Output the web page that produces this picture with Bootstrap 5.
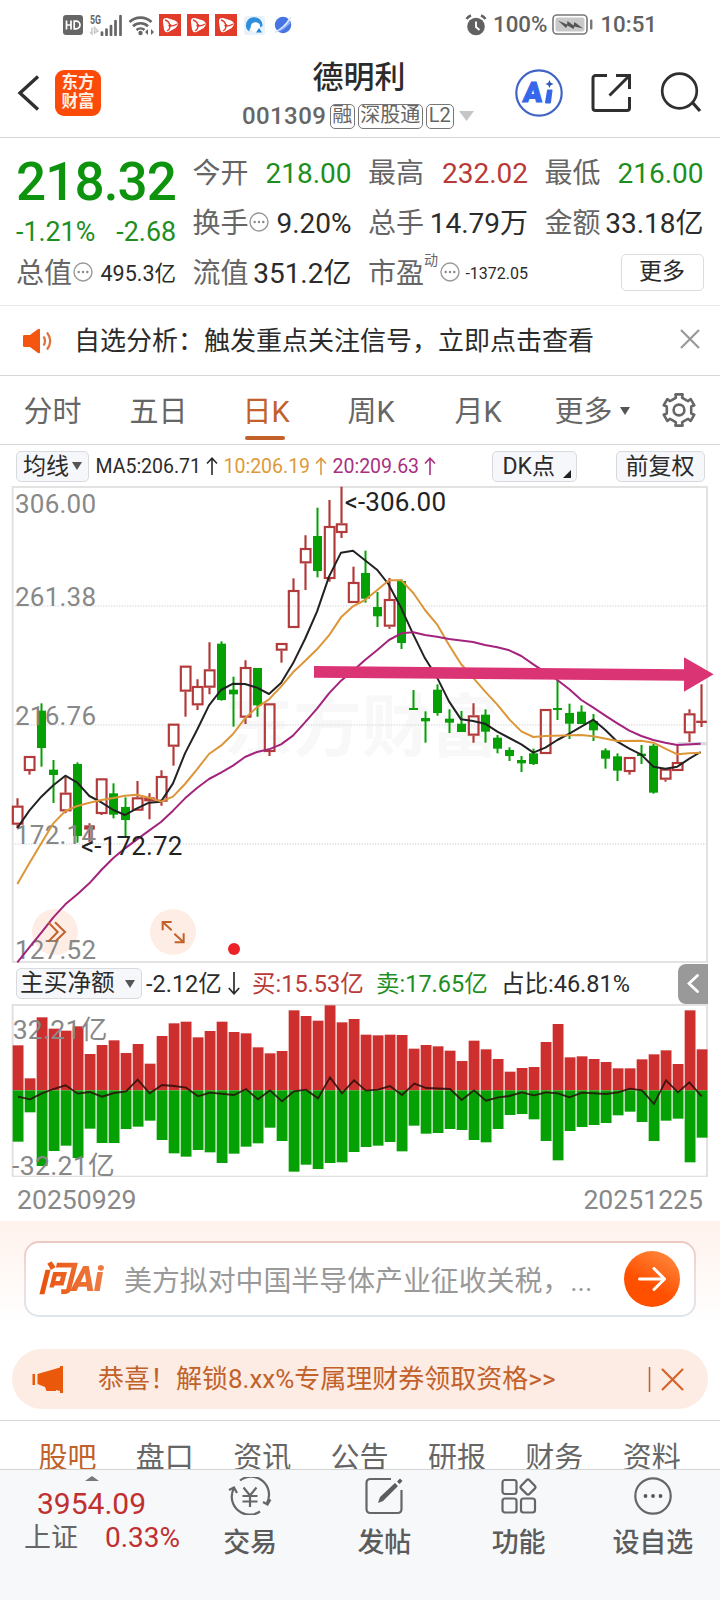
<!DOCTYPE html>
<html lang="zh-CN">
<head>
<meta charset="utf-8">
<meta name="viewport" content="width=device-width, initial-scale=1">
<title>德明利 001309</title>
<link rel="stylesheet" href="https://cdn.jsdelivr.net/npm/bootstrap@5.3.0/dist/css/bootstrap.min.css">
<style>
  :root{--up:#b93a38;--down:#1e8e1e;--accent:#c2612a;--ink:#2b2b2b;--dim:#666;--line:#d6d7d9}
  html,body{overflow:hidden}
  body{font-family:Roboto,"Noto Sans CJK SC",sans-serif;color:var(--ink);background:#fff;width:720px;height:1600px;white-space:nowrap}
  svg{display:block;flex:none}
  .c-up{color:var(--up)}.c-down{color:var(--down)}.c-dim{color:var(--dim)}.c-accent{color:var(--accent)}
  .statusbar{height:48px;padding:1px 63px 0 63px;color:#616161;font-size:22.3px;font-weight:500;line-height:49px}
  .topbar{height:90px;border-bottom:1px solid var(--line)}
  .topbar-left{width:242px;padding-left:17px}
  .topbar-mid{width:234px}
  .app-logo{width:46px;height:46px;border-radius:9px;background:#fc4a08;color:#ffefe4;font-size:16.5px;line-height:19.5px;font-weight:700;margin-left:15px;padding-top:3px}
  .stock-name{font-size:31px;line-height:38px;font-weight:500;padding-top:11px}
  .stock-code{font-size:24px;font-weight:500;line-height:28px;color:#666}
  .tagbox{border:1.5px solid #777;border-radius:5px;height:25px;line-height:21px;font-size:20px;font-weight:400;padding:0 1.5px;color:#666}
  .quote{height:168px;padding:11px 16px 0;border-bottom:1px solid #eaeaea;grid-template-columns:160px 159px 160px 159px;column-gap:16.5px;grid-template-rows:50px 50px 50px;font-size:28px;line-height:50px}
  .price{font-size:53px;font-weight:500;color:#0d930d;line-height:66px;letter-spacing:-.9px}
  .chg{font-size:26.8px;line-height:34px}
  .dots{width:20px;height:20px}
  .pill-more{height:37px;width:83px;border:1.5px solid #dcdcdc;border-radius:5px;line-height:33px;font-size:23px;margin-top:4.5px}
  .notice{height:70px;padding:0 20px 0 22px;font-size:26px;border-bottom:1px solid var(--line)}
  .periods{height:69px;border-bottom:1px solid var(--line);grid-template-columns:106px 113px 105px 107px 100px 107px 36px;padding-left:23.5px;font-size:29px;line-height:73px;color:#666}
  .underbar{position:absolute;left:2px;bottom:9px;width:40px;height:4px;border-radius:2px;background:var(--accent)}
  .chip{background:#f6f7fa;border:1.5px solid #d9dadd;border-radius:5px;height:31px;line-height:29px;font-size:23px;padding:0 6px}
  .ma-row{height:41px;padding:1px 15.5px 0 16px;font-size:19.5px;line-height:31px}
  .flow-row{height:41px;padding-left:16px;font-size:23.5px}
  .flow-row>span:not(.chip):not(.side-tab){padding-top:3px}
  .side-tab{width:30px;height:40px;background:#999;border-radius:8px 0 0 8px;margin-right:12px}
  .dates{height:44px;padding:0 17px;font-size:26.6px;color:#888;line-height:46px}
  .ask{height:128px;background:linear-gradient(#fff2ec 0,#fff 100px);padding:20px 24px 0}
  .ask-box{height:76px;border:2px solid transparent;border-radius:15px;background:linear-gradient(#fff,#fff) padding-box,linear-gradient(#ecc9c2,#f0dedd 50%,#dfe5ee) border-box;padding:0 14px 0 12px}
  .ask-logo{font-size:35px;font-weight:900;font-style:italic;letter-spacing:-1px;width:86px;padding-top:2px;background:linear-gradient(90deg,#e8500c,#f08a55);-webkit-background-clip:text;background-clip:text;color:transparent}
  .ask-text{font-size:27.9px;color:#999;padding-top:5px}
  .go{width:56px;height:56px;border-radius:50%;background:linear-gradient(30deg,#ff5000 40%,#ff9147)}
  .promo{height:60px;margin:0 12px;border-radius:30px;background:#fcece4;padding:0 24px 0 20px;font-size:26px;color:var(--accent)}
  .sections{height:49px;margin-top:11px;border-top:1px solid var(--line);padding-left:38.5px;font-size:29px;line-height:74px;color:#666;overflow:hidden}
  .sections>div{width:97.6px}
  .dock{height:131px;background:#f7f8fa;border-top:1px solid #d3d4d6}
  .dock-index{width:183px}
  .dock-item{flex:1 1 0;min-width:0;font-size:27px;line-height:38px;color:#5c5c5c;font-weight:500;padding-top:7px}
  .dock-item span{margin-top:9px}
  .idx-value{font-size:30px;line-height:36px;color:#c0302f;padding-left:37px}
</style>
</head>
<body>

<header>
  <div class="statusbar d-flex align-items-center">
    <svg width="20" height="20" viewBox="0 0 20 20"><rect width="20" height="20" rx="3" fill="#666"/><path d="M3.500 5.500v9M3.500 10h4M8 5.500v9M11.200 6.200v7.600h2a3.800 3.800 0 0 0 0-7.600z" fill="none" stroke="#fff" stroke-width="1.700"/></svg>
    <svg style="margin-left:6px" width="34" height="22" viewBox="0 0 34 22"><text x="1" y="9.500" font-size="12" font-weight="700" fill="#666" textLength="11" lengthAdjust="spacingAndGlyphs">5G</text><path d="M3 13.500v6.500l-2-2M5.500 20v-6.500l3.500 3.500-3 1.500" stroke="#c9c9c9" stroke-width="1.500" fill="none"/><path d="M13 18.500v2.500M17.500 15.500v5.500M22 12v9M26.500 7v14M31.500 2v19" stroke="#666" stroke-width="2.700" stroke-linecap="round"/></svg>
    <svg style="margin-left:5px" width="27" height="22" viewBox="0 0 27 22"><g fill="none" stroke="#666" stroke-width="2.600"><path d="M1.500 8A16 16 0 0 1 23.500 8M5 12.200a11 11 0 0 1 15 0M8.500 16a6 6 0 0 1 8 0"/></g><circle cx="12.500" cy="19" r="2.200" fill="#666"/><path d="M17 18l3-3v6zM26 18l-3-3v6z" fill="#666"/></svg>
    <div class="d-flex" style="gap:6px;margin-left:4px">
      <svg width="22" height="22" viewBox="0 0 22 22"><use href="#clipApp"/></svg>
      <svg width="22" height="22" viewBox="0 0 22 22"><use href="#clipApp"/></svg>
      <svg width="22" height="22" viewBox="0 0 22 22"><use href="#clipApp"/></svg>
    </div>
    <svg style="margin-left:7px" width="21" height="21" viewBox="0 0 21 21"><rect y="2" width="21" height="19" rx="3" fill="#e9f1f9"/><path d="M2.500 14.500a8.300 8.300 0 1 1 16-2.500l-3 2a5 5 0 0 0-8-1 4 4 0 0 0-2 4.500q-2-1-3-3z" fill="#2d8fdc"/><circle cx="11.500" cy="13" r="4.800" fill="#fff"/><path d="M12 18.500h6l-3-4.500z" fill="#2486d8"/></svg>
    <svg style="margin-left:9px" width="18" height="18" viewBox="0 0 18 18"><circle cx="9" cy="9" r="8.200" fill="#4674e2"/><path d="M.5 16.500C7 14 13 8 17 1" stroke="#dfe9ff" stroke-width="1.800" fill="none"/><path d="M4 15.500C9 13 14 9 16.500 5.500" stroke="#8fb1f8" stroke-width="1.300" fill="none"/></svg>
    <svg class="ms-auto" width="22" height="22" viewBox="0 0 22 22"><circle cx="11" cy="12.500" r="8.800" fill="#616161"/><path d="M1.500 5a9 9 0 0 1 4.500-3.500M20.500 5A9 9 0 0 0 16 1.500" stroke="#616161" stroke-width="2.400" fill="none"/><path d="M11 7.500v5.500l3.500 3" stroke="#fff" stroke-width="1.900" fill="none"/></svg>
    <span style="margin-left:6px">100%</span>
    <svg style="margin:0 7px 0 5px" width="41" height="21" viewBox="0 0 41 21"><rect x="1" y="1" width="34" height="19" rx="4" fill="#fff" stroke="#777" stroke-width="1.600"/><rect x="3.500" y="3.500" width="29" height="14" rx="2" fill="#c9c9c9"/><path d="M6 6.500l9 4 .5-3.500 6 4.500 1-3.500 8.500 6.500-8.500-2-1 2.500-6-3.500-1.500 2.500z" fill="#555"/><rect x="38" y="5.500" width="2.400" height="10" rx="1" fill="#777"/></svg>
    <span>10:51</span>
  </div>

  <div class="topbar d-flex">
    <div class="topbar-left d-flex align-items-center">
      <svg width="23" height="36" viewBox="0 0 23 36"><path d="M21 1.500L3 18l18 16.500" fill="none" stroke="#2f2f2f" stroke-width="3.400"/></svg>
      <div class="app-logo text-center">东方<br>财富</div>
    </div>
    <div class="topbar-mid">
      <div class="stock-name text-center">德明利</div>
      <div class="stock-code d-flex align-items-center" style="padding-top:5px">
        <span style="letter-spacing:.4px">001309</span>
        <span class="tagbox" style="margin-left:3.500px">融</span>
        <span class="tagbox" style="margin-left:3px">深股通</span>
        <span class="tagbox" style="margin-left:3px;padding:0 2px">L2</span>
        <svg style="margin-left:5px" width="15" height="10" viewBox="0 0 15 10"><path d="M0 0h15L7.500 10z" fill="#c6c6c6"/></svg>
      </div>
    </div>
    <div class="d-flex align-items-center" style="padding-left:39px">
      <svg width="48" height="48" viewBox="0 0 48 48"><circle cx="24" cy="24" r="22.700" fill="#fff" stroke="#4263c6" stroke-width="2.200"/><text x="8" y="33" font-size="28" font-weight="900" fill="#3766ea" stroke="#3766ea" stroke-width="1.200" transform="skewX(-5) translate(2.500 0)">A</text><path d="M33 21.500h3.500L35 33.500h-4z" fill="#3766ea" stroke="#3766ea" stroke-width="2" stroke-linejoin="round"/><path d="M34.500 11l1.200 2.800 2.800 1.200-2.800 1.200-1.200 2.800-1.200-2.800-2.800-1.200 2.800-1.200z" fill="#3154b8"/></svg>
      <svg style="margin-left:28px" width="40" height="40" viewBox="0 0 40 40"><g fill="none" stroke="#2f2f2f" stroke-width="3"><path d="M16 2.500H4.500a2.500 2.500 0 0 0-2.500 2.500V35a2.500 2.500 0 0 0 2.500 2.500H36a2.500 2.500 0 0 0 2.500-2.500V24"/><path d="M25 2.500h13.500V16M38 3L18.500 22.500"/></g></svg>
      <svg style="margin-left:29px" width="42" height="42" viewBox="0 0 42 42"><circle cx="19.500" cy="19" r="17.300" fill="none" stroke="#2f2f2f" stroke-width="2.700"/><path d="M32 30l8 9" stroke="#2f2f2f" stroke-width="3.200"/></svg>
    </div>
  </div>
</header>

<main>
  <section class="quote d-grid">
    <div style="grid-row:1/3"><div class="price">218.32</div><div class="chg c-down d-flex justify-content-between">
      <span>-1.21%</span><span>-2.68</span></div></div>
    <div class="d-flex justify-content-between"><span class="c-dim">今开</span><span class="c-down">218.00</span></div>
    <div class="d-flex justify-content-between"><span class="c-dim">最高</span><span class="c-up">232.02</span></div>
    <div class="d-flex justify-content-between"><span class="c-dim">最低</span><span class="c-down">216.00</span></div>
    <div class="d-flex align-items-center"><span class="c-dim">换手</span><svg class="dots mb-1" viewBox="0 0 20 20"><use href="#more"/></svg><span class="ms-auto">9.20%</span></div>
    <div class="d-flex justify-content-between"><span class="c-dim">总手</span><span>14.79万</span></div>
    <div class="d-flex justify-content-between"><span class="c-dim">金额</span><span>33.18亿</span></div>
    <div class="d-flex align-items-center"><span class="c-dim">总值</span><svg class="dots mb-1" style="margin-left:1px" viewBox="0 0 20 20"><use href="#more"/></svg><span class="ms-auto" style="font-size:21.500px">495.3亿</span></div>
    <div class="d-flex justify-content-between"><span class="c-dim">流值</span><span>351.2亿</span></div>
    <div class="d-flex align-items-center"><span class="c-dim">市盈</span><span class="c-dim align-self-start" style="font-size:14px;line-height:22px">动</span><svg class="dots mb-1" style="margin-left:1.500px" viewBox="0 0 20 20"><use href="#more"/></svg><span class="ms-auto" style="font-size:16px">-1372.05</span></div>
    <div class="pill-more text-center ms-auto">更多</div>
  </section>

  <section class="notice d-flex align-items-center">
    <svg width="31" height="26" viewBox="0 0 31 26"><path d="M1 8q0-1 1.500-1H8l8-6q2-1 2 1v22q0 2-2 1l-8-6H2.500Q1 19 1 18z" fill="#f4560f"/><path d="M21.500 8.500q3 4.500 0 9M25 4.500q6.500 8.500 0 17" fill="none" stroke="#e0703a" stroke-width="2.200"/></svg>
    <span style="margin-left:21px;padding-top:2px">自选分析：触发重点关注信号，立即点击查看</span>
    <svg class="ms-auto mb-1" width="20" height="20" viewBox="0 0 20 20"><path d="M1 1l18 18M19 1L1 19" stroke="#999" stroke-width="2.200"/></svg>
  </section>

  <nav class="periods d-grid">
    <div>分时</div><div>五日</div>
    <div class="c-accent position-relative">日K<span class="underbar"></span></div>
    <div>周K</div><div>月K</div>
    <div class="d-flex align-items-center">更多<svg class="mb-1" style="margin-left:7px" width="10" height="8" viewBox="0 0 10 8"><path d="M0 0h10L5 8z" fill="#555"/></svg></div>
    <div class="d-flex align-items-center"><svg style="margin:0 0 6px -1px" width="36" height="36" viewBox="-18 -18 36 36"><path id="gearPath" fill="none" stroke="#666" stroke-width="2.600" stroke-linejoin="round"/><circle r="5.400" fill="none" stroke="#666" stroke-width="2.600"/></svg></div>
  </nav>

  <div class="ma-row d-flex align-items-center">
    <span class="chip d-flex align-items-center">均线<svg style="margin-left:3px" width="10" height="8" viewBox="0 0 10 8"><path d="M0 0h10L5 8z" fill="#555"/></svg></span>
    <span style="margin-left:6.500px;width:105px;padding-top:1.500px">MA5:206.71</span>
    <svg style="margin-left:5px" width="12" height="18" viewBox="0 0 12 18" stroke="#2b2b2b"><use href="#arrowUp"/></svg>
    <span style="margin-left:6px;width:87px;color:#dc9a3a;padding-top:1.500px">10:206.19</span>
    <svg style="margin-left:4px" width="12" height="18" viewBox="0 0 12 18" stroke="#dc9a3a"><use href="#arrowUp"/></svg>
    <span style="margin-left:6px;width:87px;color:#a8307f;padding-top:1.500px">20:209.63</span>
    <svg style="margin-left:4px" width="12" height="18" viewBox="0 0 12 18" stroke="#a8307f"><use href="#arrowUp"/></svg>
    <span class="chip d-flex ms-auto" style="width:85px;padding-left:9.500px">DK点<svg class="align-self-end" style="margin:0 0 3px 8px" width="8" height="8" viewBox="0 0 8 8"><path d="M8 0v8H0z" fill="#222"/></svg></span>
    <span class="chip text-center" style="width:89px;margin-left:38.500px">前复权</span>
  </div>

  <!-- Chart units: 3 per CSS pixel -->
  <svg id="kchart" width="720" height="477" viewBox="0 18 2160 1431" font-size="78"></svg>

  <div class="flow-row d-flex align-items-center">
    <span class="chip d-flex align-items-center" style="padding:0 6px 0 3px;width:126px;font-size:23.700px">主买净额<svg class="ms-auto" width="10" height="8" viewBox="0 0 10 8"><path d="M0 0h10L5 8z" fill="#555"/></svg></span>
    <span style="margin-left:4px;width:77px">-2.12亿</span>
    <svg style="margin-left:5px" width="12" height="23" viewBox="0 0 12 23"><path d="M6 0v21.500M.8 16L6 21.800 11.200 16" fill="none" stroke="#2b2b2b" stroke-width="1.700"/></svg>
    <span class="c-up" style="margin-left:12px;width:124px">买:15.53亿</span>
    <span class="c-down" style="width:125px">卖:17.65亿</span>
    <span>占比:46.81%</span>
    <span class="side-tab ms-auto d-flex align-items-center justify-content-center"><svg width="12" height="19" viewBox="0 0 12 19"><path d="M10.500 1.500L2 9.500l8.500 8" fill="none" stroke="#fff" stroke-width="2.800" stroke-linecap="round"/></svg></span>
  </div>

  <svg id="vchart" width="720" height="173" viewBox="0 132 2160 519" font-size="80"></svg>
  <div class="dates d-flex justify-content-between"><span>20250929</span><span>20251225</span></div>

  <section class="ask">
    <div class="ask-box d-flex align-items-center">
      <span class="ask-logo">问Ai</span>
      <span class="ask-text">美方拟对中国半导体产业征收关税，...</span>
      <span class="go ms-auto d-flex align-items-center justify-content-center"><svg width="28" height="24" viewBox="0 0 28 24"><path d="M1.500 12H26M16 1.500L26.500 12 16 22.500" fill="none" stroke="#fff" stroke-width="3" stroke-linecap="round" stroke-linejoin="round"/></svg></span>
    </div>
  </section>

  <div class="promo d-flex align-items-center">
    <svg width="31" height="27" viewBox="0 0 31 27"><path d="M.5 8h2.500v11H.5zM5.500 8L28 1.500V0h3v27h-3v-2l-4-1v1h-9.500l-1.500-4-7.500-3z" fill="#ea580c"/></svg>
    <span style="margin-left:35px;padding-top:1px">恭喜！解锁8.xx%专属理财券领取资格&gt;&gt;</span>
    <svg class="ms-auto" width="36" height="25" viewBox="0 0 36 25"><path d="M1.500 0v25" stroke="#c2612a" stroke-width="1.500"/><path d="M14 2l21 21M35 2L14 23" stroke="#d9622a" stroke-width="2.200"/></svg>
  </div>

  <nav class="sections d-flex">
    <div class="c-accent">股吧</div><div>盘口</div><div>资讯</div><div>公告</div><div>研报</div><div>财务</div><div>资料</div>
  </nav>
</main>

<footer class="dock d-flex">
  <div class="dock-index">
    <svg style="margin:6px 0 0 85px" width="14" height="5" viewBox="0 0 14 5"><path d="M0 5h14L7 0z" fill="#777"/></svg>
    <div class="idx-value" style="margin-top:5px">3954.09</div>
    <div class="d-flex" style="padding:0 0 0 24px;line-height:32px"><span class="c-dim" style="font-size:27px;width:81px">上证</span><span style="font-size:28px;color:#c0302f">0.33%</span></div>
  </div>
  <div class="dock-item d-flex flex-column align-items-center">
    <svg width="44" height="38" viewBox="0 0 44 38"><g fill="none" stroke="#666" stroke-width="2.200"><path d="M12 3.500A18 18 0 0 1 39 26M32 34.500A18 18 0 0 1 5.500 12M1 13l5-2.500L9 16M35 25l4.500 2.500 3-5"/><path d="M15.500 10.500l6.500 8 6.500-8M14.500 19h15M14.500 24.500h15M22 18.500V30"/></g></svg>
    <span>交易</span>
  </div>
  <div class="dock-item d-flex flex-column align-items-center">
    <svg width="38" height="38" viewBox="0 0 38 38"><g fill="none" stroke="#666" stroke-width="2.200"><path d="M26 2H5.500Q1.500 2 1.500 6v26q0 4 4 4h27q4 0 4-4V13"/></g><path d="M13 26l2-6L30 6l3 3-15 15zM32 4.500l3-3 2.500 2.500-3 3z" fill="#5c5c5c"/></svg>
    <span>发帖</span>
  </div>
  <div class="dock-item d-flex flex-column align-items-center">
    <svg width="36" height="38" viewBox="0 0 36 38"><g fill="none" stroke="#666" stroke-width="2.200"><rect x="1.500" y="3" width="14" height="14" rx="2.500"/><rect x="1.500" y="21.500" width="14" height="14" rx="2.500"/><rect x="20" y="21.500" width="14" height="14" rx="2.500"/><path d="M25.500 3.200q1.500-1.500 3 0l5.500 5.800q1 1.200 0 2.400l-5.500 5.500q-1.500 1.400-3 0L20 11.400q-1-1.200 0-2.400z"/></g></svg>
    <span>功能</span>
  </div>
  <div class="dock-item d-flex flex-column align-items-center">
    <svg width="38" height="38" viewBox="0 0 38 38"><circle cx="19" cy="19" r="17.700" fill="none" stroke="#666" stroke-width="2.200"/><g fill="#555"><circle cx="11.500" cy="19" r="1.900"/><circle cx="19" cy="19" r="1.900"/><circle cx="26.500" cy="19" r="1.900"/></g></svg>
    <span>设自选</span>
  </div>
</footer>

<svg width="0" height="0" class="position-absolute">
  <defs>
    <g id="clipApp"><rect width="22" height="22" fill="#e23b2a"/><path d="M4 8Q3.500 3.500 8 4l8 2.500q3.500 1.500 2.500 5-1 2.500-4.500 4l-4.500 2.500q-3.500 1-4.500-2.500z" fill="#fff"/><path d="M6 6q4 1 5 5.500M11 11.500q0 4-3 5.500M11 11.500q3 1 7-1.500" fill="none" stroke="#e23b2a" stroke-width="1.300"/><circle cx="11" cy="11.500" r="1.600" fill="#e23b2a"/></g>
    <g id="more"><circle cx="10" cy="10" r="9" fill="none" stroke="#999" stroke-width="1.400"/><g fill="#888"><circle cx="5.700" cy="10" r="1.200"/><circle cx="10" cy="10" r="1.200"/><circle cx="14.300" cy="10" r="1.200"/></g></g>
    <path id="arrowUp" d="M6 18V1.500M1 6.500L6 1.200l5 5.300" fill="none" stroke-width="1.600"/>
  </defs>
</svg>

<script src="https://cdn.jsdelivr.net/npm/bootstrap@5.3.0/dist/js/bootstrap.bundle.min.js"></script>
<script>
const X = i => 52 + 36 * i;

// Daily candles: direction, high, body top, body bottom, low
const candles = `r 955 977 1034 1045|r 828 828 873 884|g 670 692 804 860|g 840 869 885 969|r 890 938 994 1000|g 847 852 1068 1088|r 1030 1036 1049 1085|r 895 895 1002 1005|g 910 940 1004 1015|g 952 981 1020 1068|r 903 952 992 992|r 940 952 964 1018|r 871 888 965 977|r 731 731 800 857|r 557 557 635 710|r 598 618 676 690|r 487 568 623 643|g 484 491 660 662|g 590 629 643 740|r 541 561 713 732|g 564 564 676 710|r 670 670 816 828|r 489 489 512 548|r 295 330 444 444|r 166 204 250 330|g 83 168 273 292|r 60 138 297 305|r 20 130 159 174|r 260 306 369 369|g 212 279 356 368|g 336 381 409 441|r 294 357 440 446|g 298 303 489 507|g 630 684 690 690|g 694 714 724 788|g 613 629 699 707|g 688 716 728 759|g 693 731 756 756|r 670 706 767 788|g 688 704 755 788|g 765 773 806 820|g 802 810 828 843|g 828 840 850 876|g 806 820 852 855|r 687 687 822 822|g 600 684 690 720|g 671 699 731 777|g 676 695 732 732|g 702 723 751 783|g 805 811 836 866|g 820 829 872 903|r 831 831 876 884|g 795 821 828 852|g 792 797 938 941|r 866 866 899 905|r 795 846 873 873|r 688 700 760 786|r 613 722 729 741`.split('|');

const ma5 = '52,1044 88,992 124,950 160,916 196,887 232,908 268,948 304,967 340,990 375,1005 411,985 447,968 483,965 519,910 555,820 591,750 627,676 663,630 699,611 735,612 771,623 807,642 843,609 879,550 915,477 951,395 987,290 1023,218 1059,212 1095,241 1131,269 1165,312 1204,385 1240,464 1275,535 1311,592 1347,664 1383,718 1419,723 1455,731 1492,755 1528,774 1564,793 1600,818 1636,803 1672,780 1708,761 1744,740 1780,719 1816,750 1852,785 1888,806 1924,824 1960,860 1996,866 2032,860 2068,836 2102,816';
const ma10 = '52,1212 88,1150 124,1090 160,1030 196,993 232,978 268,968 304,960 340,954 375,947 411,944 447,953 483,965 519,950 555,912 591,868 627,822 663,797 699,762 735,715 771,682 807,658 843,620 879,577 915,543 951,508 987,466 1023,412 1059,379 1095,360 1131,331 1167,301 1204,301 1240,339 1275,390 1311,433 1347,495 1383,552 1419,593 1455,634 1492,674 1528,718 1564,754 1600,771 1636,768 1744,765 1780,769 1852,783 1924,782 1960,788 1996,806 2032,823 2068,820 2102,818';
const ma20 = '52,1447 88,1402 124,1358 160,1312 196,1273 232,1243 268,1210 304,1170 340,1134 375,1105 411,1078 447,1052 483,1026 519,992 555,955 591,924 627,897 663,878 699,857 735,831 771,816 807,808 843,793 879,767 915,727 951,686 987,640 1023,602 1059,572 1095,540 1131,511 1167,480 1204,460 1240,457 1275,465 1311,470 1347,477 1419,486 1455,495 1492,502 1528,511 1564,528 1600,553 1636,577 1672,600 1708,628 1744,660 1780,683 1816,707 1852,730 1888,752 1924,768 1960,780 1996,788 2032,795 2102,791';

let k = `<text x="672" y="813" font-size="205" font-weight="700" fill="#f8f8f8" textLength="825">东方财富</text>`;
for (const y of [378, 735, 1092]) k += `<path d="M37 ${y}H2121" stroke="#dedede" stroke-width="4" stroke-dasharray="4 4"/>`;
k += `<rect x="38" y="21" width="2083" height="1425" fill="none" stroke="#e2e2e2" stroke-width="6"/>`;
candles.forEach((row, i) => {
  const [dir, ...v] = row.split(' ');
  const [hi, top, bot, lo] = v.map(Number), x = X(i) + 0.5;
  if (dir === 'g') {
    k += `<path d="M${x} ${hi}V${lo}" stroke="#04a004" stroke-width="6"/><rect x="${x - 13.5}" y="${top}" width="27" height="${bot - top}" fill="#04a004"/>`;
  } else {
    k += `<path d="M${x} ${hi}V${top}M${x} ${bot}V${lo}" stroke="#b23a3a" stroke-width="6.5"/>`;
    k += bot - top > 14
      ? `<rect x="${x - 14}" y="${top + 3}" width="29" height="${bot - top - 6}" fill="none" stroke="#b23a3a" stroke-width="6.5"/>`
      : `<rect x="${x - 16}" y="${top}" width="32" height="${bot - top}" fill="#b23a3a"/>`;
  }
});
k += `<path d="M2032 791H2121" stroke="#d9d9e0" stroke-width="10"/>`;
for (const cx of [165, 519]) k += `<circle cx="${cx}" cy="1356" r="69" fill="#fdede5"/>`;
k += `<g fill="#888">` + [['306.00', 99], ['261.38', 378], ['216.76', 735], ['172.14', 1092], ['127.52', 1437]]
  .map(([t, y]) => `<text x="45" y="${y}" textLength="243">${t}</text>`).join('') + `</g>`;
[[ma5, '#222'], [ma10, '#dc9638'], [ma20, '#a3247c']].forEach(([p, c]) =>
  k += `<polyline points="${p}" fill="none" stroke="${c}" stroke-width="6" stroke-linejoin="round"/>`);
k += `<g fill="none" stroke="#c2612a" stroke-width="6"><path d="M145 1327l28 29-28 29M165 1327l30 29-30 29"/><path d="M488 1351v-25h27M489 1327l26 24M551 1360v27h-27M550 1386l-27-25"/></g>`;
k += `<circle cx="702" cy="1407" r="18" fill="#ec2227"/>`;
k += `<g fill="#222"><text x="1034" y="92" textLength="304">&lt;-306.00</text><text x="243" y="1124" textLength="304">&lt;-172.72</text></g>`;
k += `<path d="M942 558L2052 568V532L2141 583 2052 635V602L942 593z" fill="#db3474"/>`;
document.getElementById('kchart').innerHTML = k;

// Buy (upper) and sell (lower) bar ends, mirrored around the zero line
const flow = '256 545,355 457,172 618,206 573,212 557,199 594,282 506,255 549,241 549,279 507,252 500,311 482,228 540,190 580,185 590,232 570,213 577,185 609,216 581,220 560,262 550,280 503,273 543,151 635,168 614,182 627,136 609,187 607,177 576,224 561,226 557,224 546,225 574,266 497,255 521,259 519,272 507,303 510,242 540,268 547,297 507,335 465,324 462,321 478,246 543,192 601,292 513,289 501,297 495,306 489,325 466,325 455,298 486,283 543,271 482,312 476,151 607,268 533'.split(',');
const net = '54,410 90,418 126,400 160,387 197,376 233,401 269,396 306,410 342,399 378,394 413,359 449,400 486,375 522,378 558,383 594,409 630,398 702,405 738,387 774,418 810,391 846,424 882,394 918,389 954,415 990,352 1026,400 1062,361 1098,392 1134,389 1170,378 1206,405 1243,371 1279,384 1350,387 1385,420 1422,391 1458,422 1495,412 1528,408 1565,397 1602,406 1638,397 1674,400 1708,412 1746,398 1818,402 1854,397 1890,386 1926,391 1962,432 1998,361 2034,397 2068,367 2105,409';
let v = `<rect x="38" y="135" width="2083" height="515" fill="none" stroke="#e2e2e2" stroke-width="6"/>`;
flow.forEach((row, i) => {
  const [a, b] = row.split(' ').map(Number), x = X(i) - 14;
  v += `<rect x="${x}" y="${a}" width="32.5" height="${391 - a}" fill="#cd2e2e"/><rect x="${x}" y="391" width="32.5" height="${b - 391}" fill="#04a004"/>`;
});
v += `<polyline points="${net}" fill="none" stroke="#2a0e08" stroke-opacity=".85" stroke-width="5.5"/>`;
v += `<g fill="#888"><text x="38" y="236" textLength="284">32.21亿</text><text x="36" y="646" textLength="308">-32.21亿</text></g>`;
document.getElementById('vchart').innerHTML = v;

// Gear outline: six teeth
let d = '';
for (let n = 0; n < 6; n++) {
  [[-22, 12.3], [-14, 12.8], [-13, 16], [13, 16], [14, 12.8], [22, 12.3]].forEach(([o, r], j) => {
    const a = (n * 60 - 90 + o) * Math.PI / 180;
    d += (n + j ? 'L' : 'M') + (r * Math.cos(a)).toFixed(2) + ' ' + (r * Math.sin(a)).toFixed(2);
  });
}
document.getElementById('gearPath').setAttribute('d', d + 'z');
</script>
</body>
</html>
